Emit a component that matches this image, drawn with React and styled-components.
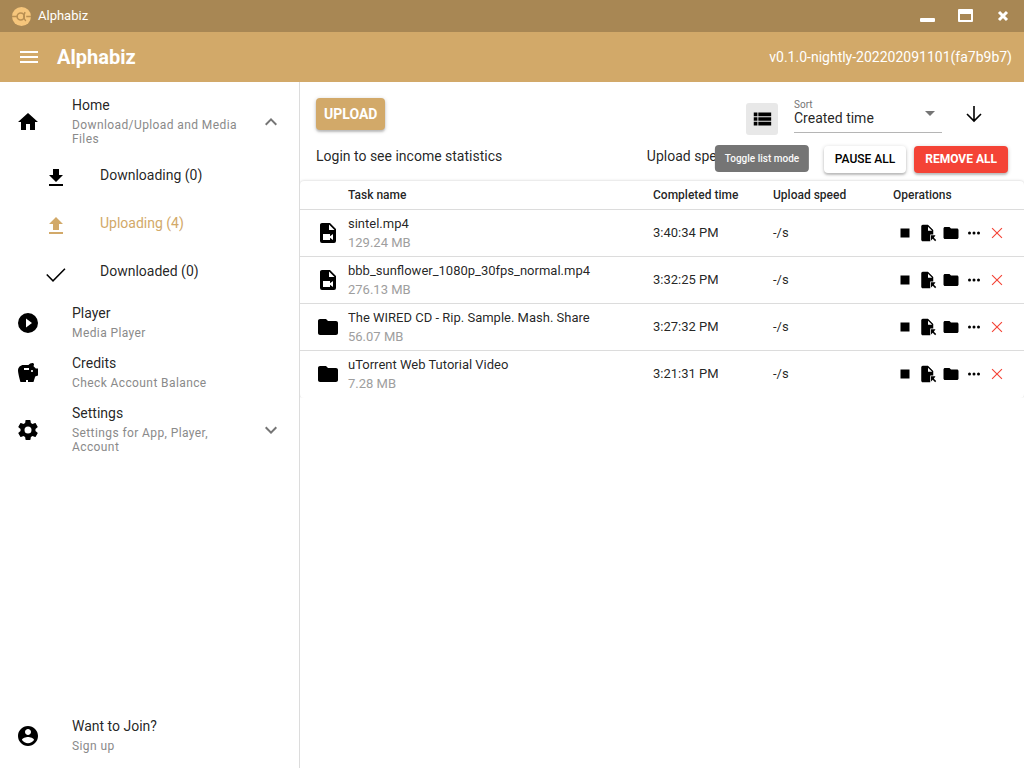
import React from 'react';
import styled, { createGlobalStyle } from 'styled-components';

const Global = createGlobalStyle`
  *, *::before, *::after { box-sizing: border-box; }
  body {
    margin: 0;
    background: #fff;
    color: rgba(0, 0, 0, 0.87);
    font-family: Roboto, "Liberation Sans", sans-serif;
    font-size: 14px;
    line-height: 20px;
  }
  button, select { font: inherit; color: inherit; }
  button { border: 0; padding: 0; background: none; cursor: pointer; }
`;

const ICONS = {
  menu: 'M3 6h18v2H3V6m0 5h18v2H3v-2m0 5h18v2H3v-2z',
  home: 'M10 20v-6h4v6h5v-8h3L12 3 2 12h3v8z',
  download: 'M5 20h14v-2H5m14-9h-4V3H9v6H5l7 7 7-7z',
  upload: 'M9 16v-6H5l7-7 7 7h-4v6H9m-4 4v-2h14v2H5z',
  check: 'M9 17.7 3.3 12l-1.1 1.100L9 19.900 21.500 7.300 20.400 6.200z',
  play: 'M10 16.5v-9l6 4.5M12 2a10 10 0 1 0 0 20 10 10 0 0 0 0-20z',
  piggy: 'M19.83 7.5 17.56 5.23C17.63 4.81 17.74 4.42 17.88 4.08C17.96 3.9 18 3.71 18 3.5C18 2.67 17.33 2 16.5 2C14.86 2 13.41 2.79 12.5 4H7.5C4.46 4 2 6.46 2 9.5S4.5 21 4.5 21H10V19H12V21H17.5L19.18 15.41L22 14.47V7.5H19.83M13 9H8V7H13V9M16 11C15.45 11 15 10.55 15 10S15.45 9 16 9C16.55 9 17 9.45 17 10S16.55 11 16 11Z',
  cog: 'M12 15.5A3.5 3.5 0 0 1 8.5 12 3.5 3.5 0 0 1 12 8.5a3.5 3.5 0 0 1 3.5 3.5 3.5 3.5 0 0 1-3.5 3.5m7.43-2.53c.04-.32.07-.64.07-.97s-.03-.66-.07-1l2.11-1.63c.19-.15.24-.42.12-.64l-2-3.46c-.12-.22-.39-.31-.61-.22l-2.49 1c-.52-.39-1.06-.73-1.69-.98l-.37-2.65A.506.506 0 0 0 14 2h-4c-.25 0-.46.18-.5.42l-.37 2.65c-.63.25-1.17.59-1.69.98l-2.49-1c-.22-.09-.49 0-.61.22l-2 3.46c-.13.22-.07.49.12.64L4.57 11c-.04.34-.07.67-.07 1s.03.65.07.97l-2.11 1.66c-.19.15-.25.42-.12.64l2 3.46c.12.22.39.3.61.22l2.49-1.01c.52.4 1.06.74 1.69.99l.37 2.65c.04.24.25.42.5.42h4c.25 0 .46-.18.5-.42l.37-2.65c.63-.26 1.17-.59 1.69-.99l2.49 1.01c.22.08.49 0 .61-.22l2-3.46c.12-.22.07-.49-.12-.64l-2.11-1.66z',
  account: 'M12 2C6.48 2 2 6.48 2 12s4.48 10 10 10 10-4.48 10-10S17.52 2 12 2m0 3c1.66 0 3 1.34 3 3s-1.34 3-3 3-3-1.34-3-3 1.34-3 3-3m0 14.2c-2.5 0-4.71-1.28-6-3.22.03-1.99 4-3.08 6-3.08 1.99 0 5.97 1.09 6 3.08-1.29 1.94-3.5 3.22-6 3.22z',
  up: 'M7.41 15.41 12 10.83l4.59 4.58L18 14l-6-6-6 6z',
  down: 'M7.41 8.59 12 13.17l4.59-4.58L18 10l-6 6-6-6z',
  list: 'M3 5h4v4H3zM8 5h14v4H8zM3 10h4v4H3zM8 10h14v4H8zM3 15h4v4H3zM8 15h14v4H8z',
  caret: 'M7 10l5 5 5-5z',
  folder: 'M10 4H4c-1.1 0-2 .9-2 2v12c0 1.1.9 2 2 2h16c1.1 0 2-.9 2-2V8c0-1.1-.9-2-2-2h-8z',
  video: 'M13 9h5.5L13 3.5V9M6 2h8l6 6v12a2 2 0 0 1-2 2H6a2 2 0 0 1-2-2V4c0-1.11.89-2 2-2m11 17v-6l-3 2.2V13H7v6h7v-2.2l3 2.2z',
  stop: 'M6 6h12v12H6z',
  more: 'M16 12a2 2 0 1 1 4 0 2 2 0 0 1-4 0m-6 0a2 2 0 1 1 4 0 2 2 0 0 1-4 0m-6 0a2 2 0 1 1 4 0 2 2 0 0 1-4 0z',
  thinClose: 'M20 5.200 18.800 4 12 10.800 5.200 4 4 5.200 10.800 12 4 18.800 5.200 20 12 13.200 18.800 20 20 18.800 13.200 12z',
  fileArrow: 'M12 1H5a2 2 0 0 0-2 2v18c0 1.1.9 2 2 2h10v-9h4V8l-7-7m0 8V3.500L17.500 9H12M16 15v7l2.300-2.300 3.200 3.200 1.500-1.500-3.200-3.200L22 15z',
};

const Svg = styled.svg`
  display: block;
  flex: none;
  fill: currentColor;
`;

const Icon = ({ name, size = 24 }) => (
  <Svg width={size} height={size} viewBox="0 0 24 24" aria-hidden="true">
    <path fillRule="evenodd" d={ICONS[name]} />
  </Svg>
);

const Window = styled.div`
  display: flex;
  flex-direction: column;
  min-height: 100vh;
`;

const TitleBar = styled.div`
  display: flex;
  align-items: center;
  gap: 7px;
  height: 32px;
  padding: 0 8px 0 12px;
  background: #a88754;
  color: #fff;
  font-size: 13px;
`;

const WindowControls = styled.div`
  display: flex;
  gap: 12px;
  margin-left: auto;
`;

const ControlButton = styled.button`
  display: grid;
  place-items: center;
  width: 26px;
  height: 26px;
`;

const AppBar = styled.header`
  display: flex;
  align-items: center;
  height: 50px;
  padding: 0 12px 0 17px;
  background: #d2a969;
  color: #fff;
`;

const AppTitle = styled.h1`
  flex: 1;
  margin: 0 0 0 16px;
  font-size: 20px;
  font-weight: 700;
`;

const Version = styled.span`
  font-size: 14px;
  font-weight: 400;
`;

const Body = styled.div`
  display: flex;
  flex: 1;
`;

const Sidebar = styled.nav`
  display: flex;
  flex-direction: column;
  flex: none;
  width: 300px;
  padding: 8px 0 7px;
  border-right: 1px solid #dcdcdc;
`;

const NavItem = styled.a`
  display: flex;
  align-items: center;
  min-height: 48px;
  padding: 8px 16px 8px ${(p) => (p.$nested ? 44 : 16)}px;
  color: ${(p) => (p.$active ? '#d2a969' : 'rgba(0, 0, 0, 0.87)')};
  text-decoration: none;

  & > svg:first-child { color: ${(p) => (p.$active ? '#d2a969' : '#000')}; }
  & > svg:last-child { color: #757575; }
`;

const NavText = styled.span`
  display: flex;
  flex: 1;
  flex-direction: column;
  gap: 5px;
  padding: 0 16px 0 32px;
`;

const NavLabel = styled.span`
  line-height: 15px;
`;

const NavCaption = styled.span`
  color: #8a8a8a;
  font-size: 12px;
  line-height: 14px;
  letter-spacing: 0.03333em;
`;

const Spacer = styled.div`
  flex: 1;
`;

const Main = styled.main`
  flex: 1;
  min-width: 0;
  padding-top: 16px;
`;

const Toolbar = styled.div`
  display: flex;
  align-items: flex-start;
  height: 48px;
  padding: 0 16px;
`;

const Raised = styled.button`
  border-radius: 4px;
  background: ${(p) => p.$bg};
  color: ${(p) => p.$fg};
  box-shadow: 0 1px 4px rgba(0, 0, 0, 0.2), 0 2px 2px rgba(0, 0, 0, 0.16);
  font-weight: ${(p) => p.$weight};
  text-transform: uppercase;
  white-space: nowrap;
`;

const UploadButton = styled(Raised)`
  height: 32px;
  padding: 0 8px;
  font-size: 14px;
`;

const BulkButton = styled(Raised)`
  height: 27px;
  padding: 0 11px 1px;
  font-size: 12px;
`;

const ToolbarRight = styled.div`
  display: flex;
  align-items: flex-start;
  gap: 16px;
  margin-left: auto;
  padding-right: 18px;
`;

const ToggleWrap = styled.div`
  position: relative;
  padding-top: 5px;
`;

const ToggleButton = styled.button`
  display: grid;
  place-items: center;
  width: 32px;
  height: 32px;
  border-radius: 3px;
  background: #e8e8e8;
  color: #000;
`;

const Tooltip = styled.div`
  position: absolute;
  z-index: 1;
  top: 47px;
  left: 50%;
  padding: 4px 10px 3px;
  border-radius: 4px;
  background: #757575;
  color: #fafafa;
  font-size: 10px;
  font-weight: 500;
  transform: translateX(-50%);
  white-space: nowrap;
`;

const SortField = styled.div`
  position: relative;
  display: flex;
  flex-direction: column;
  width: 148px;
  border-bottom: 1px solid #b5b5b5;

  & > svg {
    position: absolute;
    top: 3px;
    right: 0;
    color: #757575;
    pointer-events: none;
  }
`;

const SortLabel = styled.label`
  color: #757575;
  font-size: 10px;
  line-height: 13px;
`;

const SortSelect = styled.select`
  height: 21px;
  padding: 0 0 6px;
  border: 0;
  appearance: none;
  background: transparent;
  line-height: 15px;
`;

const DirectionButton = styled.button`
  display: grid;
  place-items: center;
  width: 32px;
  height: 32px;
  color: #000;
`;

const StatusRow = styled.div`
  display: flex;
  align-items: flex-start;
  gap: 8px;
  padding: 0 16px 8px;
`;

const StatusText = styled.span`
  flex: ${(p) => (p.$grow ? 1 : 'none')};
  min-width: ${(p) => (p.$grow ? 0 : 169)}px;
`;

const Card = styled.div`
  border-radius: 4px;
  box-shadow: 0 0 3px rgba(0, 0, 0, 0.22);
  clip-path: inset(-4px 0 0 0);
`;

const TaskTable = styled.table`
  width: 100%;
  border-collapse: collapse;
  table-layout: fixed;
`;

const Col = styled.col`
  width: ${(p) => (p.$w ? p.$w + 'px' : 'auto')};
`;

const Th = styled.th`
  height: 28px;
  padding: 0 16px 0 ${(p) => (p.$name ? 48 : 16)}px;
  border-bottom: 1px solid #dcdcdc;
  font-size: 12px;
  font-weight: 500;
  text-align: left;
  white-space: nowrap;
`;

const Td = styled.td`
  height: 47px;
  padding: 0 16px;
  border-bottom: 1px solid #dcdcdc;
  font-size: 13px;
  white-space: nowrap;

  tr:last-child & { border-bottom-color: transparent; }
`;

const TaskCell = styled.div`
  display: flex;
  align-items: center;
  gap: 8px;

  & > svg { color: #000; }
`;

const TaskText = styled.div`
  line-height: 19px;
`;

const TaskSize = styled.div`
  color: #9e9e9e;
`;

const Operations = styled.div`
  display: flex;
`;

const OpButton = styled.button`
  display: grid;
  place-items: center;
  width: 23px;
  height: 24px;
  color: ${(p) => (p.$danger ? '#f44336' : '#000')};
`;

const Logo = () => (
  <Svg width="19" height="19" viewBox="0 0 24 24" aria-hidden="true">
    <circle cx="12" cy="12" r="12" fill="#f6c67c" />
    <g fill="none" stroke="#b98f52" strokeWidth="2">
      <circle cx="11" cy="12" r="4.500" />
      <path d="M16.500 6.500c-1 2-1.500 4-1.500 5.500s.5 4 2.500 5.500M0 12h6.500M18 12h6" />
    </g>
  </Svg>
);

const NAV = [
  { icon: 'home', label: 'Home', caption: 'Download/Upload and Media Files', chevron: 'up' },
  { icon: 'download', label: 'Downloading (0)', nested: true },
  { icon: 'upload', label: 'Uploading (4)', nested: true, active: true },
  { icon: 'check', label: 'Downloaded (0)', nested: true },
  { icon: 'play', label: 'Player', caption: 'Media Player' },
  { icon: 'piggy', label: 'Credits', caption: 'Check Account Balance' },
  { icon: 'cog', label: 'Settings', caption: 'Settings for App, Player, Account', chevron: 'down' },
];

const TASKS = [
  { icon: 'video', name: 'sintel.mp4', size: '129.24 MB', time: '3:40:34 PM' },
  { icon: 'video', name: 'bbb_sunflower_1080p_30fps_normal.mp4', size: '276.13 MB', time: '3:32:25 PM' },
  { icon: 'folder', name: 'The WIRED CD - Rip. Sample. Mash. Share', size: '56.07 MB', time: '3:27:32 PM' },
  { icon: 'folder', name: 'uTorrent Web Tutorial Video', size: '7.28 MB', time: '3:21:31 PM' },
];

const OPS = [
  { icon: 'stop', label: 'Stop' },
  { icon: 'fileArrow', label: 'Open file' },
  { icon: 'folder', label: 'Open folder' },
  { icon: 'more', label: 'More' },
  { icon: 'thinClose', label: 'Remove', danger: true },
];

const NavEntry = ({ icon, label, caption, chevron, nested, active }) => (
  <NavItem href="#" $nested={nested} $active={active}>
    <Icon name={icon} />
    <NavText>
      <NavLabel>{label}</NavLabel>
      <NavCaption>{caption}</NavCaption>
    </NavText>
    {chevron && <Icon name={chevron} />}
  </NavItem>
);

export default function App() {
  return (
    <Window>
      <Global />
      <TitleBar>
        <Logo />
        <span>Alphabiz</span>
        <WindowControls>
          <ControlButton aria-label="Minimize">
            <Svg width="16" height="16" viewBox="0 0 16 16"><rect x="1" y="10" width="15" height="4" rx="1" /></Svg>
          </ControlButton>
          <ControlButton aria-label="Maximize">
            <Svg width="16" height="16" viewBox="0 0 16 16">
              <path fillRule="evenodd" d="M2 1h13a1 1 0 0 1 1 1v11a1 1 0 0 1-1 1H2a1 1 0 0 1-1-1V2a1 1 0 0 1 1-1zM3 6v6h11V6z" />
            </Svg>
          </ControlButton>
          <ControlButton aria-label="Close">
            <Svg width="16" height="16" viewBox="0 0 16 16">
              <path d="M4 4l8 8M12 4l-8 8" fill="none" stroke="currentColor" strokeWidth="3" />
            </Svg>
          </ControlButton>
        </WindowControls>
      </TitleBar>
      <AppBar>
        <button aria-label="Menu"><Icon name="menu" /></button>
        <AppTitle>Alphabiz</AppTitle>
        <Version>v0.1.0-nightly-202202091101(fa7b9b7)</Version>
      </AppBar>
      <Body>
        <Sidebar>
          {NAV.map((item) => <NavEntry key={item.label} {...item} />)}
          <Spacer />
          <NavEntry icon="account" label="Want to Join?" caption="Sign up" />
        </Sidebar>
        <Main>
          <Toolbar>
            <UploadButton $bg="#d2a969" $fg="#fff" $weight={700}>Upload</UploadButton>
            <ToolbarRight>
              <ToggleWrap>
                <ToggleButton aria-label="List mode" aria-describedby="mode-tip"><Icon name="list" size={22} /></ToggleButton>
                <Tooltip id="mode-tip" role="tooltip">Toggle list mode</Tooltip>
              </ToggleWrap>
              <SortField>
                <SortLabel htmlFor="sort">Sort</SortLabel>
                <SortSelect id="sort"><option>Created time</option></SortSelect>
                <Icon name="caret" />
              </SortField>
              <DirectionButton aria-label="Sort direction">
                <Svg width="18" height="18" viewBox="0 0 18 18">
                  <path d="M9 1v15M2 9l7 7 7-7" fill="none" stroke="currentColor" strokeWidth="1.600" />
                </Svg>
              </DirectionButton>
            </ToolbarRight>
          </Toolbar>
          <StatusRow>
            <StatusText $grow>Login to see income statistics</StatusText>
            <StatusText>Upload speed: -/s</StatusText>
            <BulkButton $bg="#fff" $fg="#000" $weight={500}>Pause all</BulkButton>
            <BulkButton $bg="#f44336" $fg="#fff" $weight={700}>Remove all</BulkButton>
          </StatusRow>
          <Card>
            <TaskTable>
              <colgroup><Col /><Col $w={120} /><Col $w={120} /><Col $w={147} /></colgroup>
              <thead>
                <tr><Th $name>Task name</Th><Th>Completed time</Th><Th>Upload speed</Th><Th>Operations</Th></tr>
              </thead>
              <tbody>
                {TASKS.map((t) => (
                  <tr key={t.name}>
                    <Td>
                      <TaskCell>
                        <Icon name={t.icon} />
                        <TaskText>{t.name}<TaskSize>{t.size}</TaskSize></TaskText>
                      </TaskCell>
                    </Td>
                    <Td>{t.time}</Td>
                    <Td>-/s</Td>
                    <Td>
                      <Operations>
                        {OPS.map((o) => (
                          <OpButton key={o.icon} aria-label={o.label} $danger={o.danger}>
                            <Icon name={o.icon} size={o.danger ? 16 : 18} />
                          </OpButton>
                        ))}
                      </Operations>
                    </Td>
                  </tr>
                ))}
              </tbody>
            </TaskTable>
          </Card>
        </Main>
      </Body>
    </Window>
  );
}
